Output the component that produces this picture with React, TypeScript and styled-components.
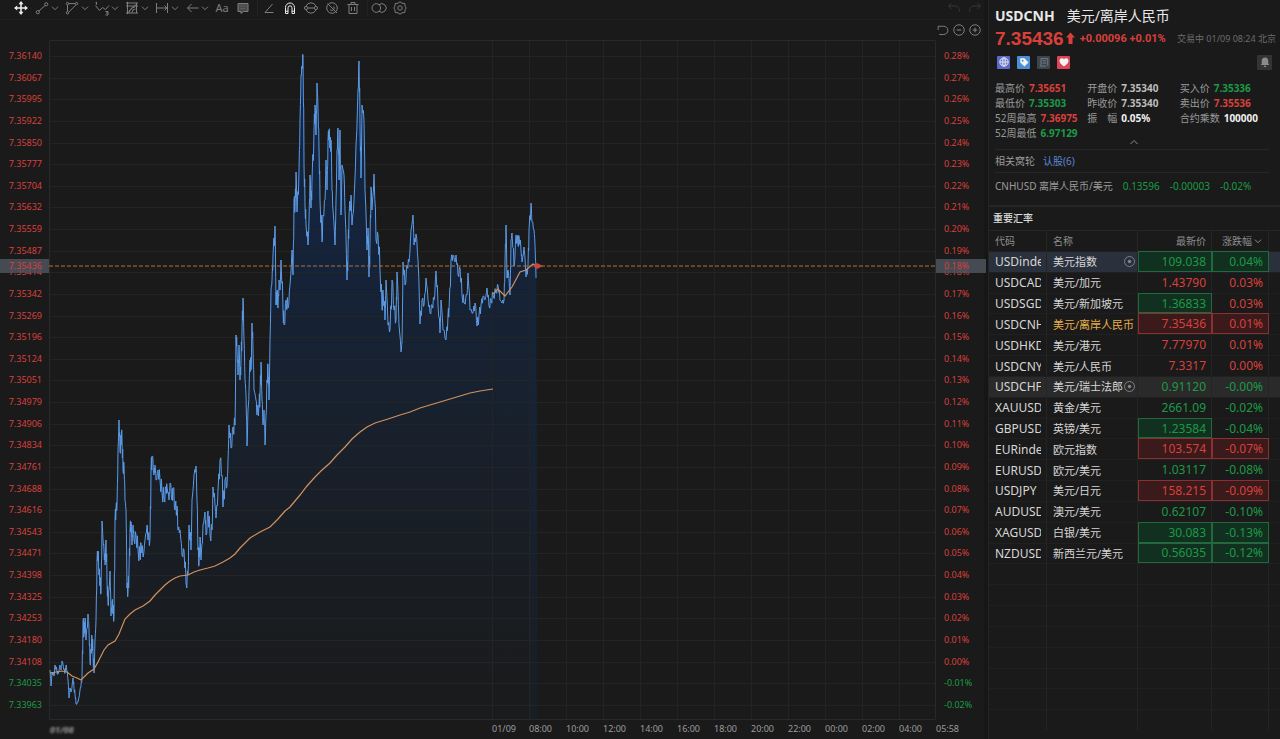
import React from "react";
import styled, { createGlobalStyle, css } from "styled-components";

const color = {
  bg: "#1a1a1a",
  line: "#262626",
  grid: "#242526",
  up: "#d9403a",
  down: "#1b9a46",
  text: "#d6d6d6",
  label: "#9a9a9a",
  dim: "#6c6c6c",
};

type Tone = "up" | "down" | "plain" | "white";
const toneColor: Record<Tone, string> = {
  up: color.up,
  down: color.down,
  plain: "#bdbdbd",
  white: "#f0f0f0",
};

const GlobalStyle = createGlobalStyle`
  * { box-sizing: border-box; }
  body {
    margin: 0;
    background: ${color.bg};
    color: ${color.text};
    font-family: "Noto Sans", "Noto Sans CJK SC", sans-serif;
    font-size: 10px;
    line-height: 15px;
  }
  button {
    margin: 0;
    padding: 0;
    border: 0;
    background: none;
    color: inherit;
    font: inherit;
    cursor: pointer;
  }
  svg { display: block; }
`;

const Page = styled.div`
  display: flex;
  min-height: 100vh;
`;

const ChartPane = styled.main`
  flex: 1;
  min-width: 0;
  display: flex;
  flex-direction: column;
`;

/* ---------- toolbar ---------- */

const Toolbar = styled.div`
  display: flex;
  align-items: center;
  height: 20px;
  padding: 0 1px 4px 13px;
  border-bottom: 1px solid #202020;
`;

const ToolGroup = styled.div<{ $gap: number }>`
  display: flex;
  gap: ${(p) => p.$gap}px;
`;

const Tool = styled.button<{ $tone?: "bright" | "faint" }>`
  display: flex;
  align-items: center;
  height: 16px;
  min-width: 16px;
  color: ${(p) => (p.$tone === "bright" ? "#ececec" : p.$tone === "faint" ? "#363636" : "#7e7e7e")};
`;

const TextTool = styled(Tool)`
  justify-content: center;
  font-size: 11px;
`;

const Divider = styled.span`
  width: 1px;
  height: 14px;
  margin: 0 3px 0 6px;
  background: #242424;
`;

const Gap = styled.span<{ $w: number }>`
  width: ${(p) => p.$w}px;
`;

const Spacer = styled.span`
  flex: 1;
`;

const ZoomRow = styled.div`
  display: flex;
  justify-content: flex-end;
  align-items: center;
  gap: 4px;
  height: 20px;
  padding: 0 3px 0 0;
  color: #808080;
`;

const ZoomButton = styled.button`
  width: 12px;
  height: 12px;
`;

const Icon = ({ size = 16, children }: { size?: number; children: React.ReactNode }) => (
  <svg width={size} height={size} viewBox="0 0 16 16" fill="none" stroke="currentColor" strokeWidth="1" aria-hidden>
    {children}
  </svg>
);

const Caret = () => (
  <svg width="10" height="10" viewBox="0 0 10 10" fill="none" stroke="currentColor" aria-hidden>
    <path d="M2 3.700 5 6.700 8 3.700" />
  </svg>
);

const menuTools: { name: string; art: React.ReactNode }[] = [
  {
    name: "Trend line",
    art: (
      <>
        <circle cx="3.8" cy="12.2" r="1.6" />
        <circle cx="12.2" cy="4.3" r="1.6" />
        <path d="M5 11 11 5.5" />
      </>
    ),
  },
  {
    name: "Shapes",
    art: (
      <>
        <path d="M4.6 3.6h6.8M3.5 5v6.6M11.8 5 4.6 12.2" />
        <circle cx="3.5" cy="3.6" r="1.2" />
        <circle cx="12.6" cy="3.6" r="1.2" />
        <circle cx="3.5" cy="12.8" r="1.2" />
      </>
    ),
  },
  {
    name: "Waves",
    art: (
      <>
        <path d="M1.5 5.5 5.5 10.5 8.5 7.5 11.5 9.5 15 5.5M2.5 2.2v2.6M1.5 2.8l1-.6" />
        <path d="M11.500 11.500h2.500v1.500h-2M14 13v2h-2.500" />
      </>
    ),
  },
  {
    name: "Pattern",
    art: (
      <>
        <path d="M2 3h12M2 6h12M2 13h12M3.5 1.8v12.4M12.5 3v10M4 12.5 12.5 4" />
        <path d="M5 12.5A6 6 0 0 1 11 7M8 12.5a3.500 3.500 0 0 1 3.500-3.500" />
      </>
    ),
  },
  { name: "Measure", art: <path d="M2.500 3v10M13.500 3v10M3 8h10M10.500 5.500 13 8l-2.500 2.500" /> },
  { name: "Arrow", art: <path d="M14.500 8H3.500M7.500 4l-4 4 4 4" /> },
];

/* ---------- chart ---------- */

const Body = styled.div`
  position: relative;
  flex: 1;
  display: flex;
`;

const Axis = styled.ol<{ $side: "left" | "right" }>`
  list-style: none;
  margin: 0;
  width: ${(p) => (p.$side === "left" ? 49 : 48)}px;
  padding: ${(p) => (p.$side === "left" ? "10px 7px 9px 0" : "10px 0 9px 8px")};
  display: flex;
  flex-direction: column;
  justify-content: space-between;
  text-align: ${(p) => (p.$side === "left" ? "right" : "left")};
  font-size: 9px;
  line-height: 12px;
`;

const AxisLabel = styled.li<{ $tone: Tone }>`
  color: ${(p) => toneColor[p.$tone]};
`;

const PriceTag = styled.span<{ $side: "left" | "right" }>`
  position: absolute;
  top: 32.2%;
  ${(p) => (p.$side === "left" ? "left: 0; padding-right: 7px; text-align: right;" : "right: -2px; padding-left: 8px;")}
  width: ${(p) => (p.$side === "left" ? 49 : 50)}px;
  height: 14px;
  background: rgba(78, 84, 94, 0.85);
  color: ${color.up};
  font-size: 9px;
  line-height: 14px;
`;

const Plot = styled.div`
  position: relative;
  flex: 1;
  min-width: 0;
`;

const PlotSvg = styled.svg`
  position: absolute;
  inset: 0;
  width: 100%;
  height: 100%;
`;

const TimeAxis = styled.ol`
  list-style: none;
  margin: 0;
  padding: 0 48px 0 49px;
  height: 19px;
  display: grid;
  grid-template-columns: 443fr repeat(12, 37fr) 0;
  font-size: 9px;
  line-height: 18px;
  color: #9c9c9c;
  white-space: nowrap;
`;

const ClippedTime = styled.span`
  display: flex;
  align-items: center;
  width: 26px;
  height: 7px;
  margin: 6px 0 0 1px;
  overflow: hidden;
  font-weight: 700;
  font-style: italic;
  filter: blur(1px);
`;

const leftLabels =
  "36140 36067 35995 35922 35850 35777 35704 35632 35559 35487 35414 35342 35269 35196 35124 35051 34979 34906 34834 34761 34688 34616 34543 34471 34398 34325 34253 34180 34108 34035 33963"
    .split(" ")
    .map((v) => "7." + v);
const rightLabels = leftLabels.map((_, i) => ((28 - i) / 100).toFixed(2) + "%");
const times = ["01/09", "08:00", "10:00", "12:00", "14:00", "16:00", "18:00", "20:00", "22:00", "00:00", "02:00", "04:00", "05:58"];

const priceData =
  "50,670 51,686 52,672 54,676 55,665 57,672 58,674 60,665 61,670 62,661 64,670 65,673 66,665 67,671 68,680 69,698 70,688 71,692 73,678 74,689 75,694 76,704 78,702 80,690 81,685 82,678 83,621 84,636 85,618 86,640 88,614 89,630 90,663 91,650 92,637 93,655 94,673 95,640 96,620 97,560 98,551 99,575 100,580 101,593 102,521 103,540 104,550 105,565 106,540 107,580 108,605 109,590 110,571 111,616 112,602 113,612 114,615 115,520 116,508 117,505 118,450 119,420 120,452 121,435 122,440 123,470 124,465 125,500 126,510 127,588 128,592 129,570 130,530 131,522 132,545 133,525 134,540 136,535 138,550 140,558 141,543 143,557 145,540 147,525 148,540 150,538 151,470 152,456 154,475 155,465 156,480 158,470 160,480 162,492 164,498 166,490 167,487 169,500 170,483 172,500 173,488 175,510 177,506 178,530 180,530 182,555 184,550 186,583 188,575 189,525 191,550 192,500 194,475 196,466 197,500 198,550 199,565 200,537 201,560 203,525 205,512 206,535 208,511 210,535 212,530 213,487 215,505 216,518 218,490 220,460 222,475 223,507 225,480 227,486 228,460 229,425 231,448 233,427 235,425 236,335 237,350 238,375 239,345 240,380 241,360 242,330 243,298 244,340 245,380 246,395 247,446 248,410 250,360 251,370 252,323 253,350 254,390 256,400 257,415 259,405 260,395 261,362 262,400 263,425 264,410 265,445 266,415 267,380 268,365 269,400 270,340 271,290 272,280 273,255 275,226 276,305 277,290 278,308 279,280 280,290 281,260 283,310 284,325 286,300 288,308 290,285 292,250 293,275 294,200 295,210 296,172 297,212 299,170 300,120 301,75 302,66 303,56 304,165 305,205 306,225 308,245 309,220 310,175 311,208 312,180 314,130 315,105 316,135 317,83 318,110 319,150 320,200 322,242 323,215 325,200 326,160 327,190 328,140 329,130 330,148 331,140 332,190 333,210 335,245 336,200 337,150 338,128 339,180 340,130 341,215 342,165 344,175 345,210 347,280 348,250 349,215 351,195 352,225 354,200 356,145 358,90 359,61 360,125 361,178 362,105 364,120 365,190 367,250 368,228 369,277 370,240 371,187 372,210 374,174 376,240 378,235 380,270 382,310 383,290 385,320 386,280 388,325 390,330 392,280 394,310 396,320 397,272 399,325 401,352 402,342 403,262 405,285 407,265 409,262 411,230 413,215 414,245 416,234 418,260 420,324 422,300 424,305 426,278 428,300 430,313 432,305 434,300 436,271 438,305 440,333 441,300 443,330 446,340 448,315 449,310 451,260 453,255 455,262 456,255 458,275 460,268 462,295 464,303 467,295 468,273 470,310 473,313 475,303 477,326 479,315 481,305 483,296 485,300 487,288 489,306 491,300 493,295 496,292 498,285 500,300 502,303 504,300 505,262 506,225 507,278 508,270 510,295 511,240 512,233 514,266 516,235 518,245 519,236 521,250 522,262 524,247 526,277 528,265 529,230 531,203 532,222 534,230 535,245 536,278";

const anchors = priceData.split(" ").map((p) => p.split(",").map(Number));

// Adds one retracement between neighbouring ticks so the line has minute-level texture.
const ticks: number[][] = [];
anchors.forEach(([x, y], i) => {
  ticks.push([x, y]);
  const next = anchors[i + 1];
  if (!next) return;
  const gap = next[0] - x;
  const wobble = (x < 82 ? 2 : x > 400 ? 5 : 8) * Math.sin(i * 12.9898);
  ticks.push([x + gap * 0.4, y + (next[1] - y) * 0.35 + wobble]);
  ticks.push([x + gap * 0.7, y + (next[1] - y) * 0.55 - wobble]);
});
const pricePath = "M" + ticks.map(([x, y]) => x.toFixed(1) + " " + y.toFixed(1)).join("L");

const averagePath =
  "M50 673 56 672 62 671 67 672 72 676 77 678 81 680 88 673 94 669 98 662 104 650 108 645 115 641 119 634 125 619 130 614 135 610 143 606 150 601 155 595 160 590 165 585 170 581 175 578 180 576 188 575 194 572 200 570 208 568 215 566 223 562 230 558 235 554 240 548 250 538 260 532 270 527 278 519 285 511 290 507 295 501 300 495 307 486 315 477 322 470 330 463 337 455 345 447 352 439 360 432 367 427 375 423 388 419 400 415 410 412 420 408 430 405 440 402 450 399 460 396 470 393 480 391 493 389M493 294 498 289 502 293 505 296 512 287 520 272 526 270 533 264 537 266";

const gridX = times.map((_, i) => 492 + i * 37);
const gridY = leftLabels.map((_, i) => 56 + i * 21.63);

const Chart = () => (
  <PlotSvg viewBox="49 40 887 680" preserveAspectRatio="none" role="img" aria-label="USDCNH intraday chart">
    <defs>
      <linearGradient id="area" x1="0" y1="56" x2="0" y2="700" gradientUnits="userSpaceOnUse">
        <stop offset="0" stopColor="#0c2a58" stopOpacity="0.85" />
        <stop offset="0.35" stopColor="#12284a" stopOpacity="0.6" />
        <stop offset="0.7" stopColor="#172538" stopOpacity="0.45" />
        <stop offset="1" stopColor="#1a2028" stopOpacity="0.2" />
      </linearGradient>
    </defs>
    <path d={pricePath + "L537 720L50 720Z"} fill="url(#area)" />
    <rect x="529" y="266" width="9" height="454" fill="#14305c" opacity="0.14" />
    <g stroke={color.grid} strokeWidth="1" opacity="0.9">
      {gridY.map((y) => (
        <path key={y} d={`M49 ${Math.round(y) + 0.5}H936`} />
      ))}
      {gridX.map((x) => (
        <path key={x} d={`M${x + 0.5} 40V720`} />
      ))}
      <path d="M49.500 720V40.500H935.500V719.500H49.500" fill="none" stroke="#2b2b2b" />
    </g>
    <path d={pricePath} fill="none" stroke="#5b9ae6" strokeWidth="1" strokeLinejoin="bevel" />
    <path d={averagePath} fill="none" stroke="#d0915e" strokeWidth="1.2" />
    <path d="M49 266H936" stroke="#b5703c" strokeWidth="1" strokeDasharray="4 2" />
    <path d="M533 266 537 263 543 266 537 269Z" fill="#c9463c" />
  </PlotSvg>
);

/* ---------- quote panel ---------- */

const Side = styled.aside`
  flex: none;
  width: 292px;
  display: flex;
  flex-direction: column;
  border-left: 1px solid #242424;
`;

const Gutter = styled.div`
  flex: none;
  width: 4px;
  background: #161616;
`;

const Quote = styled.section`
  padding: 6px 4px 0 6px;
`;

const Title = styled.h1`
  margin: 0;
  display: flex;
  gap: 12px;
  font-size: 14px;
  line-height: 20px;
  font-weight: 400;
  color: #e8e8e8;
  strong {
    font-weight: 700;
  }
`;

const PriceRow = styled.div`
  display: flex;
  align-items: center;
  height: 24px;
  white-space: nowrap;
  color: ${color.up};
  font-family: "Liberation Sans", sans-serif;
  font-weight: 700;
`;

const LastPrice = styled.span`
  font-size: 19px;
`;

const Change = styled.span`
  margin-left: 4px;
  font-size: 11px;
  font-family: Roboto, sans-serif;
  font-weight: 700;
`;

const Status = styled.span`
  margin-left: auto;
  font: 400 9px "Noto Sans", "Noto Sans CJK SC", sans-serif;
  color: ${color.dim};
`;

const BadgeRow = styled.div`
  display: flex;
  align-items: center;
  gap: 7px;
  height: 24px;
  padding: 0 4px 0 2px;
`;

const Badge = styled.button<{ $bg: string }>`
  display: flex;
  align-items: center;
  justify-content: center;
  width: 13px;
  height: 13px;
  border-radius: 1px;
  background: ${(p) => p.$bg};
  color: #f4f4f4;
  &:last-child {
    width: 15px;
    height: 15px;
    margin-left: auto;
    color: #8a8a8a;
  }
`;

const Stats = styled.dl`
  display: grid;
  grid-template-columns: 1fr 1fr 1fr;
  margin: 7px 4px 0 0;
  white-space: nowrap;
`;

const Stat = styled.div<{ $tone: Tone }>`
  display: flex;
  gap: 4px;
  dt {
    color: ${color.label};
    white-space: pre;
  }
  dd {
    margin: 0;
    font-weight: 700;
    color: ${(p) => toneColor[p.$tone]};
  }
`;

const Collapse = styled.button`
  display: flex;
  justify-content: center;
  width: 100%;
  height: 10px;
  margin-top: -2px;
  padding-right: 3px;
  color: #8a8a8a;
`;

const Related = styled.div`
  display: flex;
  gap: 8px;
  margin-right: 7px;
  padding: 4px 0;
  height: 24px;
  border-top: 1px solid ${color.line};
  border-bottom: 1px solid ${color.line};
  color: ${color.label};
  a {
    color: #5b86d6;
    text-decoration: none;
  }
`;

const Inverse = styled.div`
  display: flex;
  gap: 10px;
  height: 32px;
  padding-top: 6px;
  white-space: nowrap;
  color: ${color.down};
  span:first-child {
    color: ${color.label};
  }
`;

const ListTitle = styled.h2`
  margin: 0;
  height: 25px;
  padding: 4px 4px 0;
  border-top: 2px solid #262626;
  font-size: 10px;
  line-height: 15px;
  font-weight: 500;
  color: #dcdcdc;
`;

const Rates = styled.table`
  flex: 1;
  display: flex;
  flex-direction: column;
  font-size: 12px;
  white-space: nowrap;
`;

const rowGrid = css`
  display: grid;
  grid-template-columns: 58px 1fr 74px 57px 11px;
`;

const HeadRow = styled.tr`
  ${rowGrid}
  height: 21px;
  border-top: 1px solid ${color.line};
`;

const HeadCell = styled.th<{ $right?: boolean }>`
  display: flex;
  align-items: center;
  justify-content: ${(p) => (p.$right ? "flex-end" : "flex-start")};
  padding: 0 5px 0 6px;
  border-right: 1px solid ${color.line};
  font-size: 10px;
  font-weight: 400;
  color: #8d8d8d;
  button {
    display: flex;
    align-items: center;
    gap: 1px;
  }
`;

const Rows = styled.tbody`
  flex: 1;
  display: grid;
  grid-template-rows: repeat(23, minmax(20px, 1fr));
  padding-bottom: 9px;
`;

const Row = styled.tr<{ $bg?: string }>`
  ${rowGrid}
  background: ${(p) => p.$bg || "transparent"};
  border-top: 1px solid #202020;
`;

const Cell = styled.td<{ $hot?: boolean }>`
  display: flex;
  align-items: center;
  min-width: 0;
  padding: 0 0 0 6px;
  border-right: 1px solid #242424;
  color: ${(p) => (p.$hot ? "#e8b04a" : color.text)};
`;

const Code = styled.span`
  width: 46px;
  overflow: hidden;
`;

const Name = styled.span`
  flex: 1;
  min-width: 0;
  overflow: hidden;
  font-size: 11px;
`;

const NumCell = styled.td<{ $tone: "up" | "down"; $flash: boolean }>`
  display: flex;
  align-items: center;
  justify-content: flex-end;
  margin-top: -1px;
  padding: 0 5px 0 0;
  color: ${(p) => toneColor[p.$tone]};
  border: 1px solid transparent;
  border-right-color: #242424;
  ${(p) =>
    p.$flash &&
    (p.$tone === "up"
      ? "background: #3a1a1b; border-color: #8a3030;"
      : "background: #123020; border-color: #226a3e;")}
`;

type Rate = [string, string, string, string, "up" | "down", "up" | "down", boolean, boolean];
const rates: Rate[] = [
  ["USDindex", "美元指数", "109.038", "0.04%", "down", "down", true, true],
  ["USDCAD", "美元/加元", "1.43790", "0.03%", "up", "up", false, false],
  ["USDSGD", "美元/新加坡元", "1.36833", "0.03%", "down", "up", true, false],
  ["USDCNH", "美元/离岸人民币", "7.35436", "0.01%", "up", "up", true, true],
  ["USDHKD", "美元/港元", "7.77970", "0.01%", "up", "up", false, false],
  ["USDCNY", "美元/人民币", "7.3317", "0.00%", "up", "up", false, false],
  ["USDCHF", "美元/瑞士法郎", "0.91120", "-0.00%", "down", "down", false, false],
  ["XAUUSD", "黄金/美元", "2661.09", "-0.02%", "down", "down", false, false],
  ["GBPUSD", "英镑/美元", "1.23584", "-0.04%", "down", "down", true, false],
  ["EURindex", "欧元指数", "103.574", "-0.07%", "up", "up", true, true],
  ["EURUSD", "欧元/美元", "1.03117", "-0.08%", "down", "down", false, false],
  ["USDJPY", "美元/日元", "158.215", "-0.09%", "up", "up", true, true],
  ["AUDUSD", "澳元/美元", "0.62107", "-0.10%", "down", "down", false, false],
  ["XAGUSD", "白银/美元", "30.083", "-0.13%", "down", "down", true, true],
  ["NZDUSD", "新西兰元/美元", "0.56035", "-0.12%", "down", "down", true, true],
];

const rowBg: Record<string, string> = { USDindex: "#2a313c", USDCHF: "#2a2a2a" };

const stats: [string, string, Tone][] = [
  ["最高价", "7.35651", "up"],
  ["开盘价", "7.35340", "plain"],
  ["买入价", "7.35336", "down"],
  ["最低价", "7.35303", "down"],
  ["昨收价", "7.35340", "plain"],
  ["卖出价", "7.35536", "up"],
  ["52周最高", "7.36975", "up"],
  ["振　幅", "0.05%", "white"],
  ["合约乘数", "100000", "white"],
  ["52周最低", "6.97129", "down"],
];

const TargetIcon = () => (
  <svg width="13" height="12" viewBox="0 0 13 12" fill="none" stroke="#7c8188" aria-hidden>
    <circle cx="5.500" cy="5.500" r="5" />
    <circle cx="5.500" cy="5.500" r="1.300" fill="#8f949b" />
  </svg>
);

export default function App() {
  return (
    <Page>
      <GlobalStyle />
      <ChartPane>
        <Toolbar>
          <Tool $tone="bright" aria-label="Move">
            <Icon>
              <path d="M8 2v12M2 8h12" strokeWidth="1.600" />
              <path d="M8 1 10.500 4.200h-5zM8 15l2.500-3.200h-5zM1 8l3.200-2.500v5zM15 8l-3.200-2.500v5z" fill="currentColor" stroke="none" />
            </Icon>
          </Tool>
          <Gap $w={5} />
          <ToolGroup $gap={4}>
            {menuTools.map((t) => (
              <Tool key={t.name} aria-label={t.name}>
                <Icon>{t.art}</Icon>
                <Caret />
              </Tool>
            ))}
          </ToolGroup>
          <Gap $w={4} />
          <ToolGroup $gap={5}>
            <TextTool>Aa</TextTool>
            <Tool aria-label="Comment">
              <Icon>
                <path d="M3 3.500h10v8H8.500l-2.500 2v-2H3z" fill="#4a4a4a" />
                <path d="M5 6h6M5 8.500h5" stroke="#5c5c5c" />
              </Icon>
            </Tool>
          </ToolGroup>
          <Divider />
          <ToolGroup $gap={5}>
            <Tool aria-label="Angle">
              <Icon>
                <path d="M11.500 4 4 12.500h8.500" />
              </Icon>
            </Tool>
            <Tool $tone="bright" aria-label="Magnet">
              <Icon>
                <path d="M3.500 13.500V7.500a4.500 4.500 0 0 1 9 0v6H10V7.800a2 2 0 0 0-4 0v5.700zM3.500 11.200H6M10 11.200h2.500" />
              </Icon>
            </Tool>
            <Tool aria-label="Lock drawings">
              <Icon>
                <path d="M3.200 6a5.200 5.200 0 0 1 9.600 0M3.200 10a5.200 5.200 0 0 0 9.600 0M4.500 8h7" />
                <circle cx="3" cy="8" r="1.600" />
                <circle cx="13" cy="8" r="1.600" />
              </Icon>
            </Tool>
            <Tool aria-label="Hide drawings">
              <Icon>
                <circle cx="8" cy="8" r="5.300" />
                <path d="M3.500 3.500 13 13M9.500 6.500a2.300 2.300 0 1 1-3.300 3.200" />
              </Icon>
            </Tool>
            <Tool aria-label="Delete">
              <Icon>
                <path d="M2.500 4.500h11M6 4.500v-2h4v2M4 4.500v9h8v-9M6.500 7v4M9.500 7v4" />
              </Icon>
            </Tool>
          </ToolGroup>
          <Divider />
          <ToolGroup $gap={5}>
            <Tool aria-label="Compare">
              <Icon>
                <circle cx="5.300" cy="8" r="4.300" />
                <path d="M8 4.800a4.300 4.300 0 1 1 0 6.400" />
              </Icon>
            </Tool>
            <Tool aria-label="Settings">
              <Icon>
                <path d="M8 1.800 10 3.200l2.800.300.300 2.800L14.200 8l-1.100 1.700-.300 2.800-2.800.300L8 14.200l-2-1.400-2.800-.300-.300-2.800L1.800 8l1.100-1.700.300-2.800L6 3.200z" />
                <circle cx="8" cy="8" r="2.200" />
              </Icon>
            </Tool>
          </ToolGroup>
          <Spacer />
          <ToolGroup $gap={5}>
            <Tool $tone="faint" aria-label="Undo">
              <Icon>
                <path d="M5.500 3 2.500 6l3 3M2.500 6h6.500c3 0 4.500 2 4.500 6" />
              </Icon>
            </Tool>
            <Tool $tone="faint" aria-label="Redo">
              <Icon>
                <path d="M10.500 3l3 3-3 3M13.500 6H7c-3 0-4.500 2-4.500 6" />
              </Icon>
            </Tool>
          </ToolGroup>
        </Toolbar>
        <ZoomRow>
          <ZoomButton aria-label="Reset zoom">
            <Icon size={12}>
              <path d="M1.500 3H9a5.500 5.500 0 0 1 0 11H3M1.500 3v5" strokeWidth="1.300" />
            </Icon>
          </ZoomButton>
          <ZoomButton aria-label="Zoom out">
            <Icon size={12}>
              <circle cx="8" cy="8" r="7" strokeWidth="1.300" />
              <path d="M5 8h6" strokeWidth="1.500" />
            </Icon>
          </ZoomButton>
          <ZoomButton aria-label="Zoom in">
            <Icon size={12}>
              <circle cx="8" cy="8" r="7" strokeWidth="1.300" />
              <path d="M5 8h6M8 5v6" strokeWidth="1.500" />
            </Icon>
          </ZoomButton>
        </ZoomRow>
        <Body>
          <Axis $side="left">
            {leftLabels.map((v, i) => (
              <AxisLabel key={v} $tone={i > 28 ? "down" : "up"}>
                {v}
              </AxisLabel>
            ))}
          </Axis>
          <Plot>
            <Chart />
          </Plot>
          <Axis $side="right">
            {rightLabels.map((v, i) => (
              <AxisLabel key={v} $tone={i > 28 ? "down" : "up"}>
                {v}
              </AxisLabel>
            ))}
          </Axis>
          <PriceTag $side="left">7.35436</PriceTag>
          <PriceTag $side="right">0.18%</PriceTag>
        </Body>
        <TimeAxis>
          <li>
            <ClippedTime>01/08</ClippedTime>
          </li>
          {times.map((t) => (
            <li key={t}>{t}</li>
          ))}
        </TimeAxis>
      </ChartPane>
      <Gutter />
      <Side>
        <Quote>
          <Title>
            <strong>USDCNH</strong>
            <span>美元/离岸人民币</span>
          </Title>
          <PriceRow>
            <LastPrice>7.35436</LastPrice>
            <svg width="12" height="14" viewBox="0 0 12 14" fill="currentColor" aria-hidden>
              <path d="M6.500 1.500 11 6.500H8.500V13h-4V6.500H2z" />
            </svg>
            <Change>+0.00096 +0.01%</Change>
            <Status>交易中 01/09 08:24 北京</Status>
          </PriceRow>
          <BadgeRow>
            <Badge $bg="#5a6cc8" aria-label="Markets">
              <Icon size={12}>
                <circle cx="8" cy="8" r="5.500" strokeWidth="1.300" />
                <ellipse cx="8" cy="8" rx="2.500" ry="5.500" />
                <path d="M2.500 8h11M8 2.500v11" />
              </Icon>
            </Badge>
            <Badge $bg="#4c8fd6" aria-label="Tag">
              <Icon size={12}>
                <path d="M3 3h5.500l5.500 5.500-5.500 5.500L3 8.500z" fill="currentColor" stroke="none" />
                <circle cx="6.200" cy="6.200" r="1.300" fill="#4c8fd6" stroke="none" />
              </Icon>
            </Badge>
            <Badge $bg="#3c444c" aria-label="Notes">
              <Icon size={12}>
                <path d="M4 3.500h9v9.500M4 3.500v8.500L3 13.500h8M6 6.500h5M6 9.500h5" stroke="#727c86" strokeWidth="1.300" />
              </Icon>
            </Badge>
            <Badge $bg="#dc4458" aria-label="Favourite">
              <Icon size={12}>
                <path d="M8 14C3.500 10.800 2 8.800 2 6.400 2 4.400 3.400 3 5.200 3 6.400 3 7.400 3.600 8 4.700 8.600 3.600 9.600 3 10.800 3 12.600 3 14 4.400 14 6.400 14 8.800 12.500 10.800 8 14z" fill="currentColor" stroke="none" />
              </Icon>
            </Badge>
            <Badge $bg="#333333" aria-label="Alerts">
              <Icon size={12}>
                <path d="M8 2c3 0 4.300 2 4.300 4.500V10l1.500 2H2.200l1.500-2V6.500C3.700 4 5 2 8 2zM6.500 13h3v1.500h-3z" fill="currentColor" stroke="none" />
              </Icon>
            </Badge>
          </BadgeRow>
          <Stats>
            {stats.map(([k, v, tone]) => (
              <Stat key={k} $tone={tone}>
                <dt>{k}</dt>
                <dd>{v}</dd>
              </Stat>
            ))}
          </Stats>
          <Collapse aria-label="Collapse">
            <svg width="10" height="6" viewBox="0 0 10 6" fill="none" stroke="currentColor" aria-hidden>
              <path d="M1.500 5 5 1.500 8.500 5" />
            </svg>
          </Collapse>
          <Related>
            <span>相关窝轮</span>
            <a href="#warrants">认股(6)</a>
          </Related>
          <Inverse>
            <span>CNHUSD 离岸人民币/美元</span>
            <span>0.13596</span>
            <span>-0.00003</span>
            <span>-0.02%</span>
          </Inverse>
        </Quote>
        <ListTitle>重要汇率</ListTitle>
        <Rates>
          <thead>
            <HeadRow>
              <HeadCell>代码</HeadCell>
              <HeadCell>名称</HeadCell>
              <HeadCell $right>最新价</HeadCell>
              <HeadCell $right>
                <button>
                  涨跌幅
                  <Caret />
                </button>
              </HeadCell>
            </HeadRow>
          </thead>
          <Rows>
            {rates.map(([code, name, price, change, pt, ct, pf, cf]) => (
              <Row key={code} $bg={rowBg[code]}>
                <Cell>
                  <Code>{code}</Code>
                </Cell>
                <Cell $hot={code === "USDCNH"}>
                  <Name>{name}</Name>
                  {rowBg[code] && <TargetIcon />}
                </Cell>
                <NumCell $tone={pt} $flash={pf}>
                  {price}
                </NumCell>
                <NumCell $tone={ct} $flash={cf}>
                  {change}
                </NumCell>
              </Row>
            ))}
            {Array.from({ length: 8 }, (_, i) => (
              <Row key={i}>
                <Cell />
                <Cell />
                <Cell />
                <Cell />
              </Row>
            ))}
          </Rows>
        </Rates>
      </Side>
    </Page>
  );
}
